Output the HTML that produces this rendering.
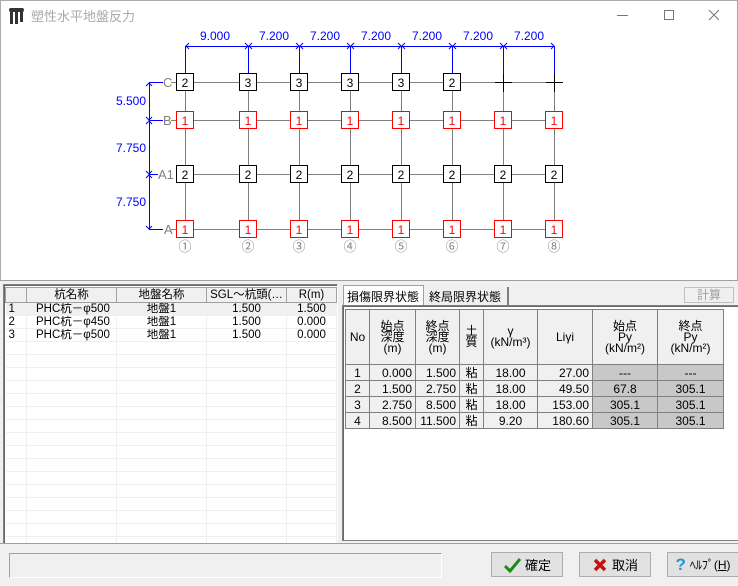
<!DOCTYPE html>
<html><head><meta charset="utf-8"><style>
*{margin:0;padding:0;box-sizing:border-box}
body{width:738px;height:586px;overflow:hidden;background:#f0f0f0;font-family:"Liberation Sans","Noto Sans CJK JP",sans-serif;font-size:12px;position:relative}
.abs{position:absolute}
table{border-collapse:collapse;font-size:12px;table-layout:fixed}
td,th{white-space:nowrap;overflow:hidden}
.lt td{height:13px;border-right:1px solid #f0f0f0;border-bottom:1px solid #f0f0f0;padding:0 3px;line-height:12px;font-size:11.5px}
.lt th{font-weight:normal;background:#f0f0f0;border:1px solid #a0a0a0;height:15px;line-height:13px;font-size:11.5px}
.rt td,.rt th{border:1px solid #808080;font-weight:normal;text-align:center;padding:0 3px}
.rt th{background:#f0f0f0;line-height:11px;font-size:12px}
.rt td{background:#f0f0f0;height:16px;line-height:14px}
.rt td.r{text-align:right}
.rt td.g{background:#c8c8c8}
.btn{position:absolute;top:552px;height:25px;width:72px;border:1px solid #adadad;background:#e1e1e1;font-size:13px;display:flex;align-items:center;justify-content:center;gap:4px}
</style></head><body>
<svg class="abs" style="left:0;top:0" width="738" height="282" font-family="Liberation Sans, Noto Sans CJK JP, sans-serif">
<rect x="0" y="0" width="738" height="281" fill="#fff"/>
<line x1="0" y1="0.5" x2="738" y2="0.5" stroke="#aaa"/>
<line x1="737.5" y1="0" x2="737.5" y2="281" stroke="#aaa"/>
<line x1="0.5" y1="0" x2="0.5" y2="281" stroke="#aaa"/>
<line x1="0" y1="280.5" x2="738" y2="280.5" stroke="#a0a0a0"/>
<g fill="#333"><rect x="9" y="8" width="15" height="4" rx="2"/><rect x="10" y="12" width="3" height="12"/><rect x="15" y="12" width="3" height="12"/><rect x="20" y="12" width="3" height="10"/></g>
<text x="31" y="21" font-size="13" fill="#aaa">塑性水平地盤反力</text>
<line x1="617" y1="15.5" x2="628" y2="15.5" stroke="#777"/>
<rect x="664.5" y="10.5" width="9" height="9" fill="none" stroke="#777"/>
<path d="M709 10L719 20M719 10L709 20" stroke="#777"/>
<g stroke="#808080" stroke-width="1">
<line x1="176" y1="82.5" x2="562" y2="82.5"/>
<line x1="176" y1="120.5" x2="562" y2="120.5"/>
<line x1="176" y1="174.5" x2="562" y2="174.5"/>
<line x1="176" y1="229.5" x2="562" y2="229.5"/>
<line x1="185.5" y1="82" x2="185.5" y2="229"/><line x1="248.5" y1="82" x2="248.5" y2="229"/><line x1="299.5" y1="82" x2="299.5" y2="229"/><line x1="350.5" y1="82" x2="350.5" y2="229"/><line x1="401.5" y1="82" x2="401.5" y2="229"/><line x1="452.5" y1="82" x2="452.5" y2="229"/><line x1="503.5" y1="82" x2="503.5" y2="229"/><line x1="554.5" y1="82" x2="554.5" y2="229"/>
</g>
<g stroke="#0000ff" fill="none">
<line x1="185.5" y1="46.5" x2="554.5" y2="46.5"/>
<line x1="185.5" y1="46" x2="185.5" y2="74"/><line x1="248.5" y1="46" x2="248.5" y2="74"/><line x1="299.5" y1="46" x2="299.5" y2="74"/><line x1="350.5" y1="46" x2="350.5" y2="74"/><line x1="401.5" y1="46" x2="401.5" y2="74"/><line x1="452.5" y1="46" x2="452.5" y2="74"/><line x1="503.5" y1="46" x2="503.5" y2="74"/><line x1="554.5" y1="46" x2="554.5" y2="74"/>
<line x1="149.5" y1="82" x2="149.5" y2="229"/>
<line x1="149" y1="82.5" x2="163" y2="82.5"/><line x1="149" y1="120.5" x2="163" y2="120.5"/><line x1="149" y1="174.5" x2="158" y2="174.5"/><line x1="149" y1="229.5" x2="163" y2="229.5"/>
<path d="M189 43l-3 3 3 3M245 43l3 3-3 3M252 43l-3 3 3 3M296 43l3 3-3 3M303 43l-3 3 3 3M347 43l3 3-3 3M354 43l-3 3 3 3M398 43l3 3-3 3M405 43l-3 3 3 3M449 43l3 3-3 3M456 43l-3 3 3 3M500 43l3 3-3 3M507 43l-3 3 3 3M551 43l3 3-3 3"/>
<path d="M146 86l3-3 3 3M146 117l3 3 3-3M146 124l3-3 3 3M146 171l3 3 3-3M146 178l3-3 3 3M146 226l3 3 3-3"/>
</g>
<g fill="#0000ff" font-size="12" text-anchor="middle">
<text x="215" y="40">9.000</text><text x="274" y="40">7.200</text><text x="325" y="40">7.200</text><text x="376" y="40">7.200</text><text x="427" y="40">7.200</text><text x="478" y="40">7.200</text><text x="529" y="40">7.200</text>
<text x="131" y="105">5.500</text><text x="131" y="152">7.750</text><text x="131" y="206">7.750</text>
</g>
<g fill="#808080" font-size="13">
<text x="163" y="87">C</text><text x="163" y="125">B</text><text x="158" y="179">A1</text><text x="164" y="234">A</text>
</g>
<g stroke="#808080"><line x1="171" y1="82.5" x2="177" y2="82.5"/><line x1="171" y1="120.5" x2="177" y2="120.5"/><line x1="171" y1="229.5" x2="177" y2="229.5"/></g>
<g stroke="#000"><line x1="495" y1="82.5" x2="512" y2="82.5"/><line x1="546" y1="82.5" x2="563" y2="82.5"/><line x1="503.5" y1="74" x2="503.5" y2="92"/><line x1="554.5" y1="74" x2="554.5" y2="92"/></g>
<g font-size="12" text-anchor="middle">
<g fill="#fff" stroke="#000">
<rect x="176.5" y="73.5" width="17" height="17"/><rect x="239.5" y="73.5" width="17" height="17"/><rect x="290.5" y="73.5" width="17" height="17"/><rect x="341.5" y="73.5" width="17" height="17"/><rect x="392.5" y="73.5" width="17" height="17"/><rect x="443.5" y="73.5" width="17" height="17"/>
<rect x="176.5" y="165.5" width="17" height="17"/><rect x="239.5" y="165.5" width="17" height="17"/><rect x="290.5" y="165.5" width="17" height="17"/><rect x="341.5" y="165.5" width="17" height="17"/><rect x="392.5" y="165.5" width="17" height="17"/><rect x="443.5" y="165.5" width="17" height="17"/><rect x="494.5" y="165.5" width="17" height="17"/><rect x="545.5" y="165.5" width="17" height="17"/>
</g>
<g fill="#fff" stroke="#f00">
<rect x="176.5" y="111.5" width="17" height="17"/><rect x="239.5" y="111.5" width="17" height="17"/><rect x="290.5" y="111.5" width="17" height="17"/><rect x="341.5" y="111.5" width="17" height="17"/><rect x="392.5" y="111.5" width="17" height="17"/><rect x="443.5" y="111.5" width="17" height="17"/><rect x="494.5" y="111.5" width="17" height="17"/><rect x="545.5" y="111.5" width="17" height="17"/>
<rect x="176.5" y="220.5" width="17" height="17"/><rect x="239.5" y="220.5" width="17" height="17"/><rect x="290.5" y="220.5" width="17" height="17"/><rect x="341.5" y="220.5" width="17" height="17"/><rect x="392.5" y="220.5" width="17" height="17"/><rect x="443.5" y="220.5" width="17" height="17"/><rect x="494.5" y="220.5" width="17" height="17"/><rect x="545.5" y="220.5" width="17" height="17"/>
</g>
<g fill="#000">
<text x="185" y="87">2</text><text x="248" y="87">3</text><text x="299" y="87">3</text><text x="350" y="87">3</text><text x="401" y="87">3</text><text x="452" y="87">2</text>
<text x="185" y="179">2</text><text x="248" y="179">2</text><text x="299" y="179">2</text><text x="350" y="179">2</text><text x="401" y="179">2</text><text x="452" y="179">2</text><text x="503" y="179">2</text><text x="554" y="179">2</text>
</g>
<g fill="#f00">
<text x="185" y="125">1</text><text x="248" y="125">1</text><text x="299" y="125">1</text><text x="350" y="125">1</text><text x="401" y="125">1</text><text x="452" y="125">1</text><text x="503" y="125">1</text><text x="554" y="125">1</text>
<text x="185" y="234">1</text><text x="248" y="234">1</text><text x="299" y="234">1</text><text x="350" y="234">1</text><text x="401" y="234">1</text><text x="452" y="234">1</text><text x="503" y="234">1</text><text x="554" y="234">1</text>
</g>
<g fill="#808080" font-size="13">
<text x="185" y="251">①</text><text x="248" y="251">②</text><text x="299" y="251">③</text><text x="350" y="251">④</text><text x="401" y="251">⑤</text><text x="452" y="251">⑥</text><text x="503" y="251">⑦</text><text x="554" y="251">⑧</text>
</g>
</g>
</svg>

<div class="abs" style="left:3px;top:284px;width:335px;height:260px;border:1px solid #808080;border-right-color:#fff;border-bottom-color:#fff;background:#fff;overflow:hidden;box-shadow:inset 1px 1px 0 #696969">
<table class="lt" style="width:331px;margin:2px 0 0 1px">
<colgroup><col style="width:21px"><col style="width:90px"><col style="width:90px"><col style="width:80px"><col style="width:50px"></colgroup>
<tr><th></th><th>杭名称</th><th>地盤名称</th><th>SGL～杭頭(…</th><th>R(m)</th></tr>
<tr style="background:#f0f0f0"><td>1</td><td style="padding-left:9px">PHC杭－φ500</td><td style="text-align:center">地盤1</td><td style="text-align:center">1.500</td><td style="text-align:center">1.500</td></tr>
<tr><td>2</td><td style="padding-left:9px">PHC杭－φ450</td><td style="text-align:center">地盤1</td><td style="text-align:center">1.500</td><td style="text-align:center">0.000</td></tr>
<tr><td>3</td><td style="padding-left:9px">PHC杭－φ500</td><td style="text-align:center">地盤1</td><td style="text-align:center">1.500</td><td style="text-align:center">0.000</td></tr>
<tr><td></td><td></td><td></td><td></td><td></td></tr><tr><td></td><td></td><td></td><td></td><td></td></tr><tr><td></td><td></td><td></td><td></td><td></td></tr><tr><td></td><td></td><td></td><td></td><td></td></tr><tr><td></td><td></td><td></td><td></td><td></td></tr><tr><td></td><td></td><td></td><td></td><td></td></tr><tr><td></td><td></td><td></td><td></td><td></td></tr><tr><td></td><td></td><td></td><td></td><td></td></tr><tr><td></td><td></td><td></td><td></td><td></td></tr><tr><td></td><td></td><td></td><td></td><td></td></tr><tr><td></td><td></td><td></td><td></td><td></td></tr><tr><td></td><td></td><td></td><td></td><td></td></tr><tr><td></td><td></td><td></td><td></td><td></td></tr><tr><td></td><td></td><td></td><td></td><td></td></tr><tr><td></td><td></td><td></td><td></td><td></td></tr><tr><td></td><td></td><td></td><td></td><td></td></tr><tr><td></td><td></td><td></td><td></td><td></td></tr>
</table>
</div>

<div class="abs" style="left:343px;top:285px;width:81px;height:21px;background:#fff;border:1px solid #a0a0a0;border-bottom:none;font-size:12px;padding:2px 0 0 3px;white-space:nowrap">損傷限界状態</div>
<div class="abs" style="left:426px;top:287px;width:83px;height:18px;border-right:2px solid #808080;font-size:12px;padding:1px 0 0 3px;white-space:nowrap">終局限界状態</div>
<div class="abs" style="left:684px;top:287px;width:50px;height:16px;border:1px solid #c0c0c0;color:#a0a0a0;font-size:12px;text-align:center;line-height:14px">計算</div>
<div class="abs" style="left:342px;top:305px;width:396px;height:236px;background:#fff;border:1px solid #808080;border-right:none;box-shadow:inset 1px 1px 0 #696969"></div>
<table class="rt abs" style="left:345px;top:309px;width:378px">
<colgroup><col style="width:24px"><col style="width:46px"><col style="width:44px"><col style="width:24px"><col style="width:54px"><col style="width:55px"><col style="width:65px"><col style="width:66px"></colgroup>
<tr style="height:55px"><th>No</th><th>始点<br>深度<br>(m)</th><th>終点<br>深度<br>(m)</th><th>土<br>質</th><th>γ<br>(kN/m³)</th><th>Liγi</th><th>始点<br>Py<br>(kN/m²)</th><th>終点<br>Py<br>(kN/m²)</th></tr>
<tr><td>1</td><td class="r">0.000</td><td class="r">1.500</td><td>粘</td><td>18.00</td><td class="r">27.00</td><td class="g">---</td><td class="g">---</td></tr>
<tr><td>2</td><td class="r">1.500</td><td class="r">2.750</td><td>粘</td><td>18.00</td><td class="r">49.50</td><td class="g">67.8</td><td class="g">305.1</td></tr>
<tr><td>3</td><td class="r">2.750</td><td class="r">8.500</td><td>粘</td><td>18.00</td><td class="r">153.00</td><td class="g">305.1</td><td class="g">305.1</td></tr>
<tr><td>4</td><td class="r">8.500</td><td class="r">11.500</td><td>粘</td><td>9.20</td><td class="r">180.60</td><td class="g">305.1</td><td class="g">305.1</td></tr>
</table>

<div class="abs" style="left:0;top:543px;width:738px;height:1px;background:#a0a0a0"></div>
<div class="abs" style="left:9px;top:553px;width:433px;height:25px;border:1px solid #a0a0a0;border-right-color:#fff;border-bottom-color:#fff"></div>
<div class="btn" style="left:491px"><svg width="18" height="16"><path d="M2 9l5 5L17 2" stroke="#1a8a1a" stroke-width="3" fill="none"/></svg>確定</div>
<div class="btn" style="left:579px"><svg width="16" height="16"><path d="M3 3l10 10M13 3L3 13" stroke="#c81010" stroke-width="3.5"/></svg>取消</div>
<div class="btn" style="left:667px;width:72px"><span style="color:#1a9ad0;font-weight:bold;font-size:17px">?</span><span style="font-size:12px">ﾍﾙﾌﾟ(<u>H</u>)</span></div>
</body></html>
